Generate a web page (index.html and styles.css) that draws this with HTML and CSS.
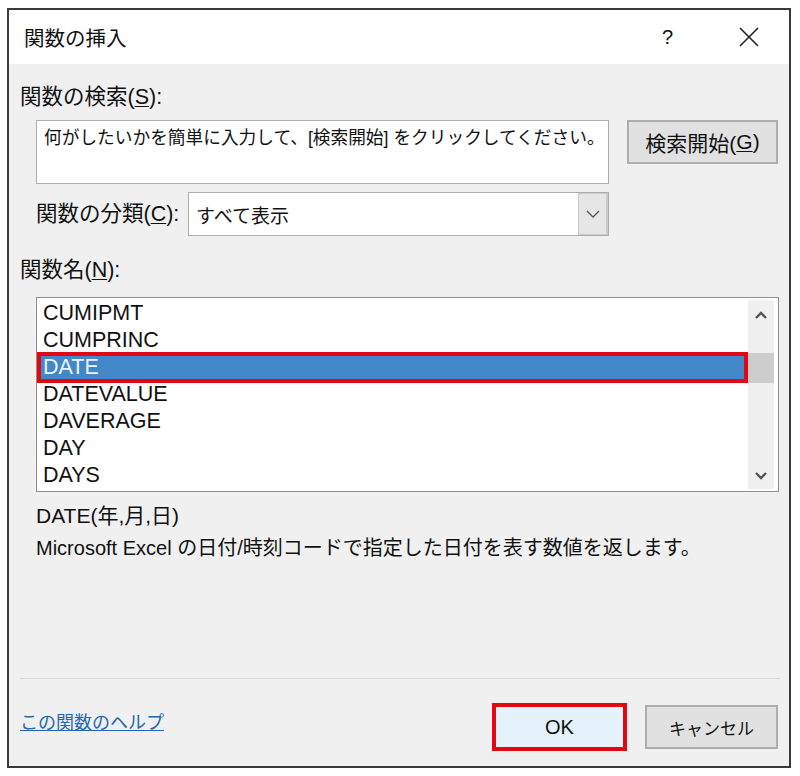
FILE: index.html
```html
<!DOCTYPE html>
<html lang="ja">
<head>
<meta charset="utf-8">
<title>関数の挿入</title>
<link rel="stylesheet" href="styles.css">
</head>
<body>
<div class="window">
  <div class="titlebar">
    <span class="title">関数の挿入</span>
    <span class="spacer"></span>
    <span class="help-q">?</span>
    <span class="close">
      <svg width="20" height="20" viewBox="0 0 20 20"><path d="M1 1 L19 19 M19 1 L1 19" stroke="#222" stroke-width="1.6" fill="none"/></svg>
    </span>
  </div>
  <div class="body">
    <div class="label top-label">関数の検索(<u>S</u>):</div>
    <div class="search-row">
      <div class="search-box">何がしたいかを簡単に入力して、[検索開始] をクリックしてください。</div>
      <div class="btn search-btn">検索開始(<u>G</u>)</div>
    </div>
    <div class="cat-row">
      <span class="label">関数の分類(<u>C</u>):</span>
      <div class="select">
        <span class="select-text">すべて表示</span>
        <span class="select-btn">
          <svg width="14" height="8" viewBox="0 0 14 8"><path d="M1 1 L7 7 L13 1" stroke="#555" stroke-width="1.3" fill="none"/></svg>
        </span>
      </div>
    </div>
    <div class="label names-label">関数名(<u>N</u>):</div>
    <div class="listbox">
      <div class="items">
        <div class="item">CUMIPMT</div>
        <div class="item">CUMPRINC</div>
        <div class="item selected">DATE</div>
        <div class="item">DATEVALUE</div>
        <div class="item">DAVERAGE</div>
        <div class="item">DAY</div>
        <div class="item">DAYS</div>
      </div>
      <div class="scrollbar">
        <svg class="arrow" width="14" height="10" viewBox="0 0 14 10"><path d="M2 8 L7 3 L12 8" stroke="#555" stroke-width="2.4" fill="none"/></svg>
        <div class="track"><div class="thumb"></div></div>
        <svg class="arrow" width="14" height="10" viewBox="0 0 14 10"><path d="M2 2 L7 7 L12 2" stroke="#555" stroke-width="2.4" fill="none"/></svg>
      </div>
    </div>
    <div class="desc">
      <div class="desc-sig">DATE(年,月,日)</div>
      <div class="desc-text">Microsoft Excel の日付/時刻コードで指定した日付を表す数値を返します。</div>
    </div>
    <div class="separator"></div>
    <div class="footer">
      <a class="help-link" href="#">この関数のヘルプ</a>
      <span class="spacer"></span>
      <div class="btn ok-btn">OK</div>
      <div class="btn cancel-btn">キャンセル</div>
    </div>
  </div>
</div>
</body>
</html>
```
FILE: styles.css
```css
html, body {
  margin: 0;
  padding: 0;
  background: #ffffff;
}
body {
  font-family: "Liberation Sans", "Noto Sans CJK JP", sans-serif;
  color: #111111;
  font-size: 21px;
}
.window {
  margin: 8px 0 0 7px;
  width: 784px;
  height: 760px;
  box-sizing: border-box;
  border: 2px solid #3a3a3a;
  background: #f0f0f0;
  display: flex;
  flex-direction: column;
}
.titlebar {
  height: 54px;
  background: #ffffff;
  display: flex;
  align-items: center;
  padding-left: 15px;
  flex-shrink: 0;
}
.title {
  font-size: 20.5px;
}
.spacer {
  flex: 1;
}
.help-q {
  font-size: 20px;
  margin-right: 66px;
}
.close {
  display: flex;
  margin-right: 30px;
}
.body {
  flex: 1;
  display: flex;
  flex-direction: column;
  padding: 0 11px;
}
.label {
  font-size: 21.5px;
  line-height: 28px;
}
u {
  text-decoration-thickness: 1px;
  text-underline-offset: 2px;
}
.top-label {
  margin-top: 19px;
}
.search-row {
  display: flex;
  align-items: flex-start;
  margin-top: 9px;
  padding-left: 16px;
}
.search-box {
  width: 573px;
  height: 64px;
  box-sizing: border-box;
  background: #fff;
  border: 1px solid #adadad;
  padding: 3px 0 0 7px;
  font-size: 17.7px;
  line-height: 28px;
  white-space: nowrap;
}
.btn {
  box-sizing: border-box;
  display: flex;
  align-items: center;
  justify-content: center;
}
.search-btn {
  margin-left: 18px;
  width: 151px;
  height: 44px;
  background: #e1e1e1;
  border: 2px solid #adadad;
  font-size: 21px;
}
.cat-row {
  display: flex;
  align-items: center;
  margin-top: 8px;
  padding-left: 16px;
}
.cat-row .label {
  width: 152px;
}
.select {
  width: 421px;
  height: 44px;
  box-sizing: border-box;
  background: #fff;
  border: 1px solid #adadad;
  display: flex;
  align-items: center;
}
.select-text {
  flex: 1;
  padding-left: 7px;
  font-size: 19px;
}
.select-btn {
  width: 30px;
  height: 42px;
  box-sizing: border-box;
  background: #e6e6e6;
  border: 1px solid #cccccc;
  border-right-width: 2px;
  display: flex;
  align-items: center;
  justify-content: center;
}
.names-label {
  margin-top: 20px;
}
.listbox {
  margin-top: 13px;
  margin-left: 16px;
  width: 743px;
  height: 195px;
  box-sizing: border-box;
  background: #fff;
  border: 1px solid #8f8f8f;
  display: flex;
  padding: 2px 4px 2px 2px;
}
.items {
  flex: 1;
}
.item {
  height: 27px;
  line-height: 27px;
  padding-left: 4px;
  font-size: 21.5px;
  color: #111111;
}
.item.selected {
  background: #4287c8;
  color: #eef3fb;
  outline: 4px solid #e30613;
  outline-offset: -2px;
  margin-right: 2px;
}
.scrollbar {
  width: 26px;
  background: #f0f0f0;
  display: flex;
  flex-direction: column;
  align-items: center;
}
.arrow {
  margin: 10px 0 8px;
  flex-shrink: 0;
}
.track {
  flex: 1;
  width: 100%;
}
.thumb {
  margin-top: 25px;
  height: 30px;
  background: #cdcdcd;
}
.desc {
  padding-left: 16px;
  margin-top: 8px;
}
.desc-sig {
  line-height: 31px;
  font-size: 21px;
}
.desc-text {
  line-height: 34px;
  font-size: 20px;
}
.separator {
  margin-top: auto;
  height: 1px;
  background: #d9d9d9;
  margin-right: -2px;
}
.footer {
  display: flex;
  align-items: flex-start;
  height: 87px;
  padding-top: 24px;
  box-sizing: border-box;
}
.help-link {
  color: #1f69b3;
  font-size: 18px;
  margin-top: 5px;
  text-decoration: underline;
  text-decoration-thickness: 1px;
}
.ok-btn {
  width: 135px;
  height: 48px;
  background: #e5f1fb;
  border: 4px solid #e30613;
  font-size: 20px;
}
.cancel-btn {
  margin-left: 18px;
  margin-top: 2px;
  width: 133px;
  height: 44px;
  background: #e1e1e1;
  border: 2px solid #adadad;
  font-size: 17px;
}
```
